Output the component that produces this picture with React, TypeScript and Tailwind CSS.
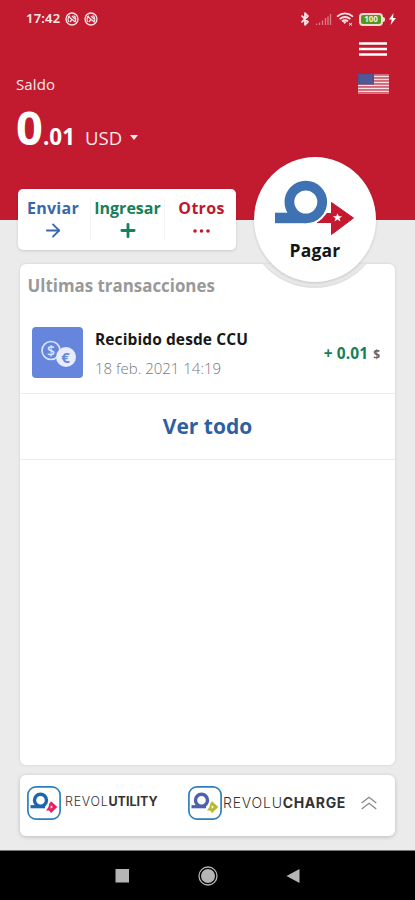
import { ArrowRight, Bluetooth, Plus } from "lucide-react"

interface LogoProps {
  ring: string
  arrow: string
}

function DoNotDisturbIcon() {
  return (
    <svg className="h-[14px] w-[14px]" viewBox="0 0 14 14" fill="none" stroke="#fbe3e5">
      <circle cx="7" cy="7" r="6" strokeWidth="1.300" />
      <path d="M4 9.800A3.900 3.900 0 0 1 5 3.800M8.600 3.600A3.900 3.900 0 0 1 9.600 9.900" strokeWidth="1.200" />
      <path d="M3.200 4.200l7.400 6M5 10l2-2.600M7 4l3 3" strokeWidth="1.300" />
    </svg>
  )
}

function SignalIcon() {
  return (
    <svg className="h-[13px] w-[17px]" viewBox="0 0 17 13" fill="none" stroke="#df7d88" strokeWidth="1.300">
      <path d="M1.500 12v-1.500M4.500 12V9.500M7.500 12V7.500M10.500 12V5M13 12V3.500M15.500 12V1" />
    </svg>
  )
}

function WifiIcon() {
  return (
    <svg className="h-[14px] w-[18px]" viewBox="0 0 18 14" fill="none" stroke="#fbe3e5" strokeWidth="1.700">
      <path d="M1 4.600Q9-1.800 17 4.600M3.600 7.200Q9 2.800 14.400 7.200M6 9.200Q9 7 12 9.200" />
      <path d="M6.500 9.300h4.500L8.700 12z" fill="#fbe3e5" stroke="none" />
      <path d="M13 11l3 2.500M16 11l-3 2.500" strokeWidth="1" />
    </svg>
  )
}

function FlagIcon() {
  return (
    <svg className="h-[20px] w-[31px]" viewBox="0 0 31 20">
      <rect width="31" height="20" fill="#f3e4e8" />
      {[1, 4, 7, 10, 13, 16, 19].map((y) => (
        <rect key={y} y={y - 0.8} width="31" height="1.500" fill="#d0495b" />
      ))}
      <rect width="16" height="10.500" fill="#4a5490" />
      <path d="M1.500 2h13M2.500 4h12M1.500 6h13M2.500 8h12" stroke="#7a80ad" strokeWidth="0.700" strokeDasharray="1 1.600" />
    </svg>
  )
}

function PayLogo() {
  return (
    <svg className="h-[56px] w-[82px]" viewBox="0 0 82 56">
      <path
        fill="#c4192f"
        stroke="#c4192f"
        strokeLinejoin="round"
        d="M43 42.500L53 33.500H57.500V22.500L79.500 38L57.500 54.500V42.500z"
      />
      <circle cx="31.800" cy="22" r="23.300" fill="#fff" />
      <path fill="#3f72b2" d="M1 32.700H31.800V43.200H1z" />
      <circle cx="31.800" cy="22" r="16.400" fill="#fff" stroke="#3f72b2" strokeWidth="9.800" />
      <path
        fill="#fff"
        d="M63.500 33.200l1.300 3h3.300l-2.600 2.100l1 3.200l-3-1.900l-3 1.900l1-3.200l-2.600-2.100h3.300z"
      />
    </svg>
  )
}

function AppLogo({ ring, arrow }: LogoProps) {
  return (
    <svg className="h-[34px] w-[34px] shrink-0" viewBox="0 0 34 34" fill="none">
      <rect x="0.900" y="0.900" width="32.200" height="32.200" rx="8" stroke="#2f7fbd" strokeWidth="1.700" />
      <circle cx="13.500" cy="14.300" r="6" stroke={ring} strokeWidth="3.400" />
      <path d="M3.500 20.700h14.500" stroke={ring} strokeWidth="3.200" />
      <path d="M24 15.300l6.300 5.700l-6.300 6l-1.800-2.500h-3.200l2.500-3.500l.7-3z" fill={arrow} />
      <path d="M23.700 19.300l2.200 1.700l-2.200 1.700z" fill="#fff" />
    </svg>
  )
}

function StatusBar() {
  return (
    <div className="flex h-[38px] items-center justify-between pr-[19px] pl-[26px] text-[#fbe9ea]">
      <div className="flex items-center">
        <span className="w-[39px] font-['Noto_Sans',sans-serif] text-[13px] font-semibold tracking-[0.2px]">17:42</span>
        <DoNotDisturbIcon />
        <span className="w-[5px]" />
        <DoNotDisturbIcon />
      </div>
      <div className="flex items-center">
        <Bluetooth className="mr-[3px] h-[14px] w-[14px]" strokeWidth={3} />
        <SignalIcon />
        <span className="w-[4px]" />
        <WifiIcon />
        <div className="ml-[5px] flex h-[13px] w-[24px] items-center justify-center rounded-[4px] border-2 border-[#f6d9cf] bg-[#4f9a1b] text-[8px] leading-none font-bold">
          100
        </div>
        <span className="h-[5px] w-[2px] rounded-r bg-[#f6d9cf]" />
        <svg className="ml-[4px] h-[12px] w-[7px]" viewBox="0 0 7 12" fill="#fff">
          <path d="M4.500 0L0 6.500h2.800L1.500 12L7 5H4z" />
        </svg>
      </div>
    </div>
  )
}

function QuickActions() {
  return (
    <div className="ml-[18px] flex h-[61px] w-[218px] rounded-[5px] bg-white pt-[9px] pb-[9px] text-[16px] leading-[20px] font-bold shadow-[0_1px_3px_rgba(0,0,0,0.14)]">
      <button className="flex w-[73px] flex-col items-center border-r border-[#f4f4f4] pr-[2px] text-[#3868aa]">
        <span className="tracking-[0.3px]">Enviar</span>
        <ArrowRight className="mt-[2px] h-[24px] w-[24px]" strokeWidth={2.1} />
      </button>
      <button className="flex w-[74px] flex-col items-center border-r border-[#f4f4f4] text-[#16805a]">
        <span>Ingresar</span>
        <Plus className="mt-[2px] h-[22px] w-[22px]" strokeWidth={3.2} />
      </button>
      <button className="flex w-[71px] flex-col items-center pl-[2px] text-[#c0182c]">
        <span className="tracking-[0.3px]">Otros</span>
        <svg className="mt-[11px] h-[4px] w-[17px]" viewBox="0 0 17 4" fill="#c0182c">
          <circle cx="2" cy="2" r="1.800" />
          <circle cx="8.500" cy="2" r="1.800" />
          <circle cx="15" cy="2" r="1.800" />
        </svg>
      </button>
    </div>
  )
}

function Transactions() {
  return (
    <section className="relative mx-[20px] mt-[14px] h-[501px] overflow-hidden rounded-[6px] bg-white shadow-[0_0_3px_rgba(0,0,0,0.12)]">
      {/* Notch around the pay button */}
      <div className="absolute top-[-110px] left-[227px] h-[134px] w-[135px] rounded-[50%] border-b-2 border-[#e1e1e1] bg-[#e9e9e9]" />
      <h2 className="h-[63px] pt-[10px] pl-[7.500px] text-[16.900px] leading-[24px] font-bold text-[#999]">
        Ultimas transacciones
      </h2>
      <div className="flex h-[67px] border-b border-[#ebebeb] pl-[12px]">
        <div className="flex h-[51px] w-[51px] items-center justify-center rounded-[4px] bg-[#6586dc]">
          <svg className="h-[30px] w-[38px]" viewBox="0 0 38 30">
            <circle cx="12" cy="12.500" r="9" fill="none" stroke="#dce5fb" strokeWidth="1.600" />
            <text x="12" y="17.500" textAnchor="middle" fill="#dce5fb" className="text-[14px] font-semibold">$</text>
            <circle cx="27" cy="19" r="10" fill="#e7edfc" />
            <text x="26.500" y="24.500" textAnchor="middle" fill="#6586dc" className="text-[15px] font-bold">€</text>
          </svg>
        </div>
        <div className="ml-[12px] flex-1">
          <p className="text-[15.500px] leading-[24px] font-bold tracking-[0.1px] text-[#181818]">Recibido desde CCU</p>
          <p className="mt-[5px] text-[15px] leading-[24px] font-light text-[#777]">18 feb. 2021 14:19</p>
        </div>
        <div className="flex items-baseline pt-[14px] pr-[15px] font-bold">
          <span className="text-[15.500px] leading-[24px] tracking-[0.1px] text-[#16805a]">+ 0.01</span>
          <span className="ml-[5px] text-[12px] text-[#666]">$</span>
        </div>
      </div>
      <button className="block h-[66px] w-full border-b border-[#ebebeb] text-[21px] font-bold text-[#2f5fa3]">
        Ver todo
      </button>
    </section>
  )
}

function PartnerApps() {
  return (
    <footer className="mx-[20px] mt-[10px] flex h-[61px] items-center rounded-[6px] bg-white pb-[6px] pl-[7px] text-[#333] shadow-[0_1px_4px_rgba(0,0,0,0.2)]">
      <AppLogo ring="#1d68ab" arrow="#e51f62" />
      <span className="ml-[4px] w-[123px] shrink-0 font-['Inter',sans-serif] text-[12.500px]">
        <span className="font-light tracking-[0.700px]">REVOL</span>
        <span className="font-bold">UTILITY</span>
      </span>
      <AppLogo ring="#4d62ad" arrow="#b9b92b" />
      <span className="ml-[1px] w-[138px] shrink-0 font-['Inter',sans-serif] text-[14px]">
        <span className="font-light tracking-[0.800px]">REVOLU</span>
        <span className="font-bold tracking-[0.600px]">CHARGE</span>
      </span>
      <svg className="h-[14px] w-[16px]" viewBox="0 0 16 14" fill="none" stroke="#888" strokeWidth="1.300">
        <path d="M0.700 7L8 1.300L15.300 7M0.700 13L8 7.300L15.300 13" />
      </svg>
    </footer>
  )
}

export default function App() {
  return (
    <div className="relative flex h-[900px] w-[415px] flex-col overflow-hidden bg-[#ebebeb] font-['Open_Sans','Noto_Sans',sans-serif]">
      <header className="h-[220px] shrink-0 bg-[#c21b2f] text-white">
        <StatusBar />
        <div className="flex justify-between pr-[26px] pl-[16px]">
          <div>
            <p className="mt-[36px] text-[15px] leading-[20px] tracking-[0.1px] text-[#fce9eb]">Saldo</p>
            <div className="flex items-baseline leading-[66px]">
              <span className="text-[47px] font-bold">0</span>
              <span className="text-[22.500px] font-bold">.01</span>
              <span className="ml-[10px] text-[18.500px] text-[#fce9eb]">USD</span>
              <span className="mt-[10px] ml-[8px] self-center border-x-[4px] border-t-[5px] border-x-transparent border-t-[#fce9eb]" />
            </div>
          </div>
          <div className="flex flex-col items-end">
            <svg className="mt-[4px] mr-[2px] h-[14px] w-[28px]" viewBox="0 0 28 14" stroke="#fff" strokeWidth="2.500">
              <path d="M0 1.500h28M0 7h28M0 12.500h28" />
            </svg>
            <div className="mt-[18px]">
              <FlagIcon />
            </div>
          </div>
        </div>
      </header>

      <main className="-mt-[31px] h-[661px] shrink-0">
        <QuickActions />
        <Transactions />
        <PartnerApps />
      </main>

      {/* Floating pay button */}
      <button className="absolute top-[157px] left-[254px] flex h-[125px] w-[122px] flex-col items-center rounded-[50%] bg-white pt-[23px] shadow-[0_1px_3px_rgba(0,0,0,0.15)]">
        <PayLogo />
        <span className="mt-[3px] text-[17.500px] leading-[22px] font-bold tracking-[0.2px] text-[#151515]">Pagar</span>
      </button>

      <nav className="flex h-[50px] shrink-0 items-center justify-center border-t border-[#777] bg-black">
        <svg className="h-[24px] w-[190px]" viewBox="0 0 190 24" fill="#b5b5b5">
          <rect x="2.500" y="5" width="13.500" height="13.500" />
          <circle cx="95" cy="12" r="7" />
          <circle cx="95" cy="12" r="9" fill="none" stroke="#b5b5b5" strokeWidth="1.300" />
          <path d="M186.500 5v14L173.500 12z" />
        </svg>
      </nav>
    </div>
  )
}
